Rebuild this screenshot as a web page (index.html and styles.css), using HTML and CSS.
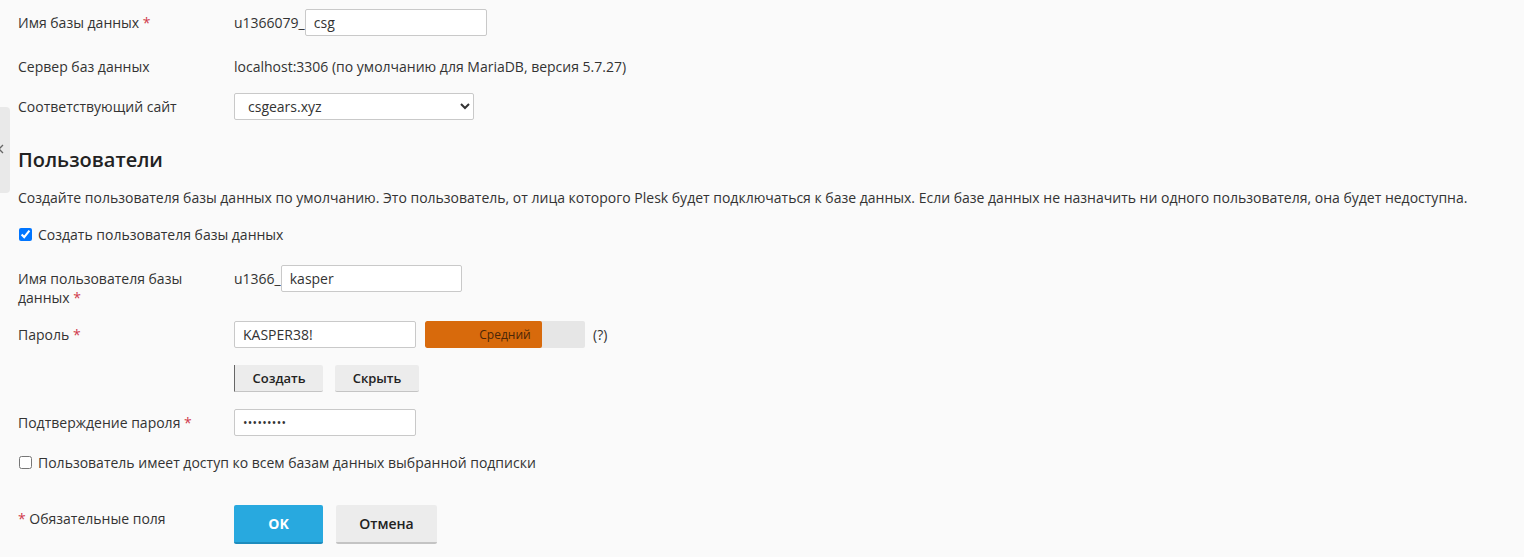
FILE: index.html
```html
<!DOCTYPE html>
<html lang="ru">
<head>
<meta charset="utf-8">
<link rel="stylesheet" href="styles.css">
</head>
<body>
<div class="side-tab"><svg class="chev" width="8" height="10" viewBox="0 0 8 10"><path d="M5 1 L1 5 L5 9" fill="none" stroke="#666" stroke-width="1.3"/></svg></div>
<form class="form">
  <div class="row r1">
    <div class="label">Имя базы данных <span class="req">*</span></div>
    <div class="field"><span class="prefix">u1366079_</span><input class="input w182" type="text" value="csg"></div>
  </div>
  <div class="row r2">
    <div class="label">Сервер баз данных</div>
    <div class="field">localhost:3306 (по умолчанию для MariaDB, версия 5.7.27)</div>
  </div>
  <div class="row r3">
    <div class="label">Соответствующий сайт</div>
    <div class="field"><select class="select"><option>csgears.xyz</option></select></div>
  </div>

  <h2 class="heading">Пользователи</h2>
  <p class="desc">Создайте пользователя базы данных по умолчанию. Это пользователь, от лица которого Plesk будет подключаться к базе данных. Если базе данных не назначить ни одного пользователя, она будет недоступна.</p>
  <label class="check c1"><input type="checkbox" checked><span>Создать пользователя базы данных</span></label>

  <div class="row r4 top">
    <div class="label two">Имя пользователя базы данных <span class="req">*</span></div>
    <div class="field"><span class="prefix">u1366_</span><input class="input w181" type="text" value="kasper"></div>
  </div>
  <div class="row r5">
    <div class="label">Пароль <span class="req">*</span></div>
    <div class="field">
      <input class="input w182" type="text" value="KASPER38!">
      <div class="strength"><div class="strength-fill"></div><span class="strength-text">Средний</span></div>
      <span class="help">(?)</span>
    </div>
  </div>
  <div class="row r6">
    <div class="label"></div>
    <div class="field"><button type="button" class="btn b-create">Создать</button><button type="button" class="btn b-hide">Скрыть</button></div>
  </div>
  <div class="row r7">
    <div class="label">Подтверждение пароля <span class="req">*</span></div>
    <div class="field"><input class="input w182 pw" type="password" value="KASPER38!"></div>
  </div>
  <label class="check c2"><input type="checkbox"><span>Пользователь имеет доступ ко всем базам данных выбранной подписки</span></label>

  <div class="row r8 top">
    <div class="label reqnote"><span class="req">*</span> Обязательные поля</div>
    <div class="field"><button type="button" class="btn-ok">OK</button><button type="button" class="btn-cancel">Отмена</button></div>
  </div>
</form>
</body>
</html>
```
FILE: styles.css
```css
html, body {
  margin: 0;
  padding: 0;
  background: #fafafa;
}
body {
  font-family: "Open Sans", "Liberation Sans", sans-serif;
  font-size: 14px;
  line-height: 19px;
  color: #333;
  position: relative;
  height: 557px;
  overflow: hidden;
}
.side-tab {
  position: absolute;
  left: 0;
  top: 107px;
  width: 10px;
  height: 86px;
  background: #e9e9e9;
  border-radius: 0 4px 4px 0;
  overflow: hidden;
}
.chev {
  position: absolute;
  left: -2px;
  top: 37px;
}
.form {
  padding: 9px 0 0 18px;
  margin: 0;
}
.row {
  display: grid;
  grid-template-columns: 216px 1fr;
  align-items: center;
}
.row.top { align-items: start; }
.field {
  display: flex;
  align-items: center;
}
.req { color: #d03a4c; }
.prefix { color: #333; }
.input {
  box-sizing: border-box;
  height: 27px;
  border: 1px solid #c9c9c9;
  border-radius: 2px;
  background: #fff;
  font-family: "Open Sans", "Liberation Sans", sans-serif;
  font-size: 14px;
  color: #333;
  padding: 0 8px;
  margin: 0;
  outline: none;
}
.w182 { width: 182px; }
.w181 { width: 181px; }
.pw { font-size: 12px; letter-spacing: 0.3px; }
.select {
  box-sizing: border-box;
  width: 240px;
  height: 27px;
  border: 1px solid #c9c9c9;
  border-radius: 2px;
  background: #fff;
  font-family: "Open Sans", "Liberation Sans", sans-serif;
  font-size: 14px;
  color: #333;
  padding: 0 9px;
  margin: 0;
}
.r2 { margin-top: 21px; }
.r3 { margin-top: 17px; }
.heading {
  margin: 27px 0 0;
  font-size: 20px;
  line-height: 26px;
  font-weight: 600;
  color: #222;
}
.desc { margin: 15px 0 0; }
.check {
  display: flex;
  align-items: center;
  height: 19px;
}
.check input {
  width: 13px;
  height: 13px;
  margin: 0 6px 0 1px;
  accent-color: #0075ff;
}
.c1 { margin-top: 18px; }
.r4 { margin-top: 21px; }
.label.two { padding-top: 4px; width: 180px; line-height: 19px; }
.r5 { margin-top: 14px; }
.strength {
  position: relative;
  width: 160px;
  height: 27px;
  margin-left: 9px;
  background: #e6e6e6;
  border-radius: 2px;
  overflow: hidden;
  display: flex;
  align-items: center;
  justify-content: center;
}
.strength-fill {
  position: absolute;
  left: 0; top: 0; bottom: 0;
  width: 117px;
  background: #d86a0c;
  border-radius: 2px;
}
.strength-text {
  position: relative;
  font-size: 12px;
  color: #4a2608;
}
.help { margin-left: 8px; color: #333; }
.r6 { margin-top: 17px; }
.btn {
  box-sizing: border-box;
  height: 27px;
  border: none;
  border-bottom: 1px solid #c4c4c4;
  border-radius: 2px;
  background: #ececec;
  font-family: "Open Sans", "Liberation Sans", sans-serif;
  font-size: 13px;
  font-weight: 600;
  color: #222;
  padding: 0;
  margin: 0;
}
.b-create { width: 89px; border-left: 1px solid #666; border-radius: 0 2px 2px 0; }
.b-hide { width: 84px; margin-left: 12px; }
.r7 { margin-top: 17px; }
.c2 { margin-top: 17px; }
.r8 { margin-top: 33px; }
.reqnote { padding-top: 4px; }
.btn-ok {
  box-sizing: border-box;
  width: 89px;
  height: 39px;
  border: none;
  border-bottom: 2px solid #1e8cbd;
  border-radius: 2px;
  background: #28a9df;
  color: #fff;
  font-family: "Open Sans", "Liberation Sans", sans-serif;
  font-size: 14px;
  font-weight: 700;
  padding: 0;
  margin: 0;
}
.btn-cancel {
  box-sizing: border-box;
  width: 101px;
  height: 39px;
  margin-left: 13px;
  border: none;
  border-bottom: 2px solid #c4c4c4;
  border-radius: 2px;
  background: #ececec;
  color: #222;
  font-family: "Open Sans", "Liberation Sans", sans-serif;
  font-size: 14px;
  font-weight: 600;
  padding: 0;
}
```
